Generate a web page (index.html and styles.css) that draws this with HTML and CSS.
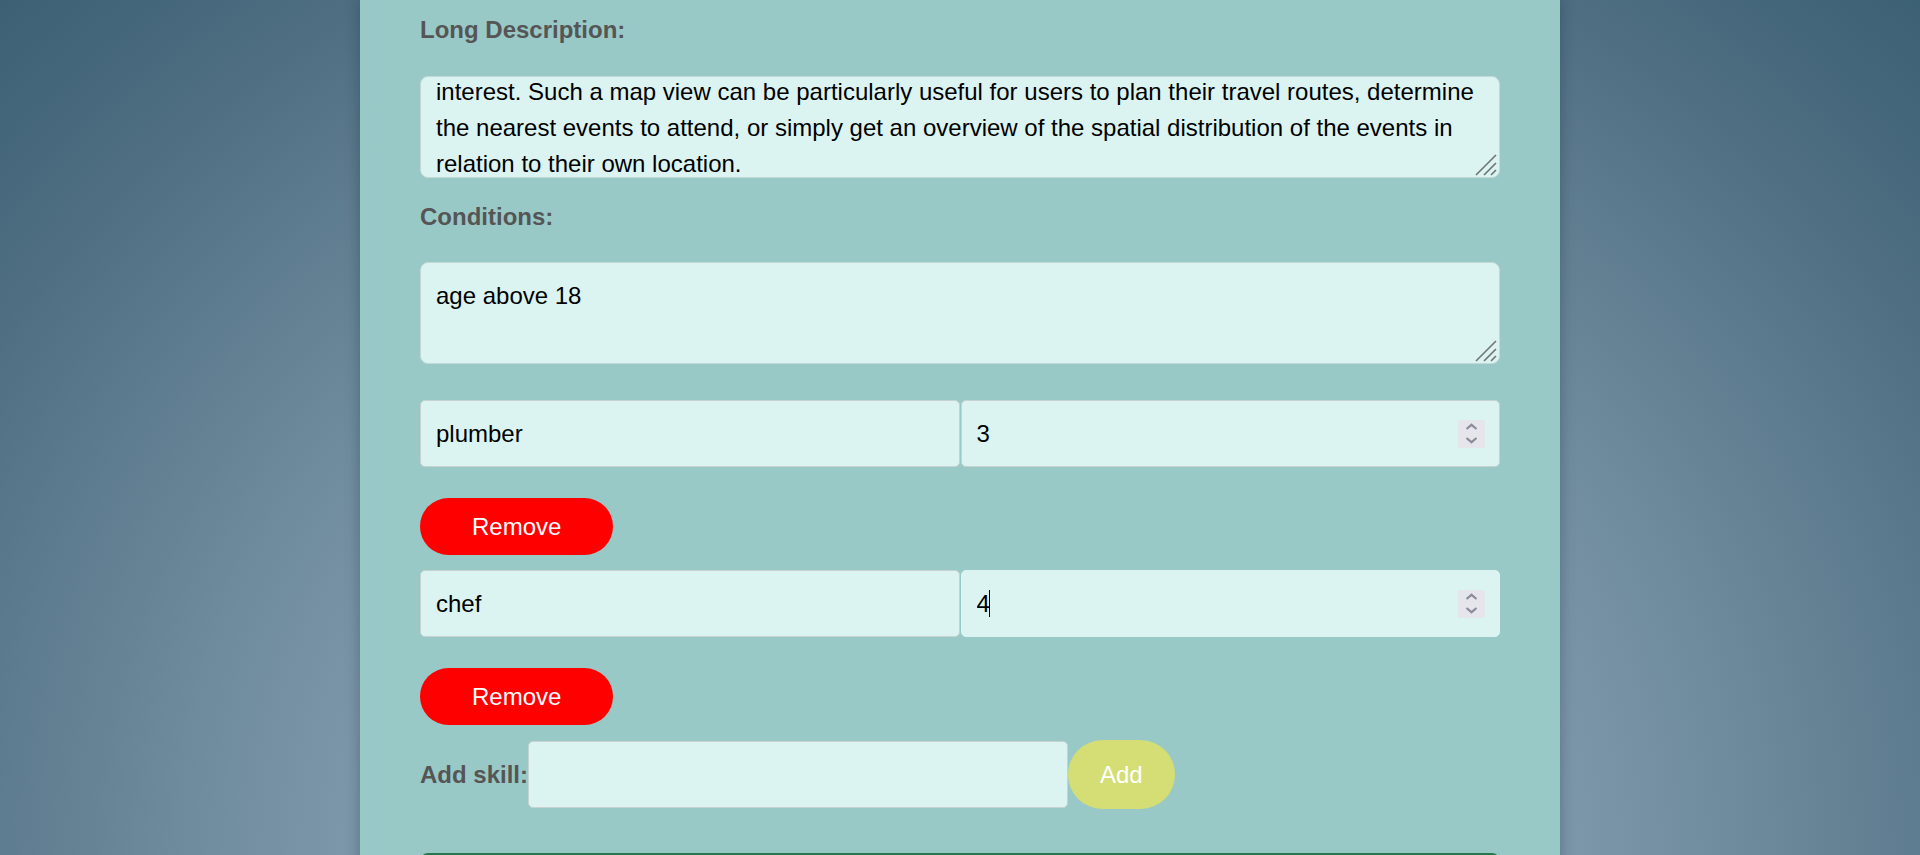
FILE: index.html
```html
<!DOCTYPE html>
<html lang="en">
<head>
<meta charset="utf-8">
<title>Edit event</title>
<link rel="stylesheet" href="styles.css">
</head>
<body>
<main class="panel">
  <form class="form">
    <label class="field-label" for="longDesc">Long Description:</label>
    <div class="area-wrap">
      <textarea class="area area-long" id="longDesc">interest. Such a map view can be particularly useful for users to plan their travel routes, determine the nearest events to attend, or simply get an overview of the spatial distribution of the events in relation to their own location.</textarea>
      <svg class="grip" width="24" height="24" viewBox="0 0 24 24"><path d="M2 22 L22 2 M10 22 L22 10 M17 22 L22 17" fill="none" stroke="#6e7373" stroke-width="1.6"/></svg>
    </div>

    <label class="field-label field-label-2" for="conditions">Conditions:</label>
    <div class="area-wrap">
      <textarea class="area" id="conditions">age above 18</textarea>
      <svg class="grip" width="24" height="24" viewBox="0 0 24 24"><path d="M2 22 L22 2 M10 22 L22 10 M17 22 L22 17" fill="none" stroke="#6e7373" stroke-width="1.6"/></svg>
    </div>

    <div class="skills">
      <div class="skill">
        <div class="skill-row">
          <input class="inp skill-name" type="text" value="plumber">
          <div class="num-wrap">
            <input class="inp num" type="number" value="3">
            <span class="spin"><svg width="27" height="28" viewBox="0 0 27 28"><path d="M8.5 9 L13.5 4.8 L18.5 9 M8.5 18 L13.5 22.2 L18.5 18" fill="none" stroke="#8e8b9c" stroke-width="2.2"/></svg></span>
          </div>
        </div>
        <button type="button" class="btn-remove">Remove</button>
      </div>

      <div class="skill">
        <div class="skill-row">
          <input class="inp skill-name" type="text" value="chef">
          <div class="num-wrap">
            <input class="inp num num-focus" type="number" value="4">
            <span class="caret"></span>
            <span class="spin"><svg width="27" height="28" viewBox="0 0 27 28"><path d="M8.5 9 L13.5 4.8 L18.5 9 M8.5 18 L13.5 22.2 L18.5 18" fill="none" stroke="#8e8b9c" stroke-width="2.2"/></svg></span>
          </div>
        </div>
        <button type="button" class="btn-remove">Remove</button>
      </div>
    </div>

    <div class="add-row">
      <label class="add-label" for="newSkill">Add skill:</label>
      <input class="inp add-input" id="newSkill" type="text">
      <button type="button" class="btn-add">Add</button>
    </div>

    <button type="submit" class="btn-submit">Save</button>
  </form>
</main>
<script src="script.js"></script>
</body>
</html>
```

FILE: styles.css
```css
html, body {
  margin: 0;
  height: 100%;
  overflow: hidden;
}

body {
  font-family: "Liberation Sans", Arial, sans-serif;
  font-size: 24px;
  background: radial-gradient(ellipse farthest-corner at 50% 100%,
    #889fb1 0%, #7d97aa 45%, #5f7d90 70%, #4f6e82 83%, #3c6074 100%);
}

.panel {
  width: 1200px;
  min-height: 100%;
  margin: 0 auto;
  background: #99c9c7;
  box-shadow: 0 0 14px rgba(20, 40, 55, 0.35);
  box-sizing: border-box;
  padding: 16px 60px 0;
}

.form {
  display: flex;
  flex-direction: column;
  align-items: flex-start;
}

.field-label {
  display: block;
  font-weight: bold;
  color: #555555;
  line-height: 28px;
  margin-bottom: 31.5px;
}

.area-wrap {
  position: relative;
  width: 1080px;
  margin: 0 0 25px;
}

.area {
  display: block;
  width: 1080px;
  height: 102px;
  box-sizing: border-box;
  padding: 15px;
  font-family: "Liberation Sans", Arial, sans-serif;
  font-size: 24px;
  line-height: 36px;
  color: #000;
  background: #dcf4f1;
  border: 1px solid #c3d9d7;
  border-radius: 8px;
  resize: none;
  overflow: hidden;
  outline: none;
  margin: 0;
}

.grip {
  position: absolute;
  right: 2px;
  bottom: 1px;
  display: block;
  pointer-events: none;
}

.skills {
  margin-top: 11px;
  display: flex;
  flex-direction: column;
  gap: 15px;
  width: 1080px;
}

.skill {
  display: flex;
  flex-direction: column;
  align-items: flex-start;
}

.skill-row {
  display: flex;
  width: 1080px;
  margin-bottom: 31px;
}

.inp {
  height: 67px;
  box-sizing: border-box;
  padding: 0 15px;
  font-family: "Liberation Sans", Arial, sans-serif;
  font-size: 24px;
  color: #000;
  background: #dcf4f1;
  border: 1px solid #c8d2d1;
  border-radius: 5px;
  outline: none;
  margin: 0;
}

.skill-name {
  width: 540px;
}

.num-wrap {
  position: relative;
  width: 540px;
  margin-left: 1px;
}

.num {
  width: 100%;
  -moz-appearance: textfield;
}

.num::-webkit-outer-spin-button,
.num::-webkit-inner-spin-button {
  -webkit-appearance: none;
  margin: 0;
}

.num-focus {
  border-color: #dcf4f1;
}

.spin {
  position: absolute;
  right: 15px;
  top: 20px;
  width: 27px;
  height: 28px;
  background: #e5e5ec;
  border-radius: 2px;
  display: block;
}

.spin svg {
  display: block;
}

.caret {
  position: absolute;
  left: 28px;
  top: 20px;
  width: 1px;
  height: 27px;
  background: #000;
}

.btn-remove {
  height: 57px;
  padding: 0 52px;
  font-family: "Liberation Sans", Arial, sans-serif;
  font-size: 24px;
  color: #ffffff;
  background: #ff0000;
  border: none;
  border-radius: 50px;
  cursor: pointer;
}

.add-row {
  display: flex;
  align-items: center;
  margin-top: 15px;
}

.add-label {
  font-weight: bold;
  color: #555555;
}

.add-input {
  width: 540px;
}

.btn-add {
  height: 69px;
  padding: 0 32px;
  font-family: "Liberation Sans", Arial, sans-serif;
  font-size: 24px;
  color: #ffffff;
  background: #d4de74;
  border: none;
  border-radius: 50px;
  cursor: pointer;
}

.btn-submit {
  margin-top: 44px;
  width: 1080px;
  height: 60px;
  font-family: "Liberation Sans", Arial, sans-serif;
  font-size: 24px;
  color: #ffffff;
  background: #237a48;
  border: none;
  border-radius: 8px;
}
```

FILE: script.js
```js
document.getElementById('longDesc').scrollTop = 18;
```
